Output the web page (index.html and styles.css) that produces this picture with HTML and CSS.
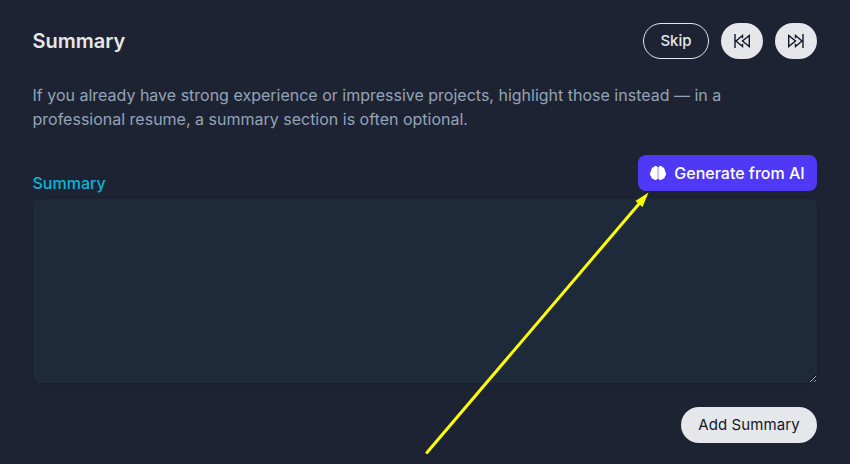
FILE: index.html
```html
<!DOCTYPE html>
<html lang="en">
<head>
<meta charset="utf-8">
<title>Summary</title>
<link rel="stylesheet" href="styles.css">
</head>
<body>
<main class="panel">
  <header class="header">
    <h1>Summary</h1>
    <div class="actions">
      <button class="btn skip">Skip</button>
      <button class="btn light nav" aria-label="Previous"><svg width="18" height="18" viewBox="0 0 18 18"><path d="M2 2v14M9.500 11.700v2.800L3 9l6.500-5.500v2.800M16.300 3.500v11L9.500 9z"/></svg></button>
      <button class="btn light nav" aria-label="Next"><svg width="18" height="18" viewBox="0 0 18 18"><path d="M16 2v14M8.500 6.300V3.500L15 9l-6.500 5.500v-2.800M1.700 3.500v11L8.500 9z"/></svg></button>
    </div>
  </header>
  <p class="hint">If you already have strong experience or impressive projects, highlight those instead — in a professional resume, a summary section is often optional.</p>
  <div class="field-head">
    <label for="summary">Summary</label>
    <button class="generate"><svg width="16" height="14" viewBox="0 0 16 14"><path class="gap" d="M7 1h2v12H7z"/><path class="lobes" d="M5.800 0C4.600 0 3.900.5 3.500 1.200 2.200 1.400 1.500 2.500 1.500 3.600.9 4.200.7 5 .8 5.700.3 6.300 0 7.100 0 8c0 1.100.5 2 1.200 2.500 0 1.300.9 2.300 2.300 2.400C4 13.600 4.700 14 5.700 14c1 0 1.700-.7 1.700-1.700V1.500C7.400.6 6.700 0 5.800 0zM10.200 0c1.200 0 1.900.5 2.300 1.200 1.300.2 2 1.300 2 2.400.6.6.8 1.400.7 2.100.5.6.8 1.400.8 2.300 0 1.100-.5 2-1.200 2.500 0 1.300-.9 2.300-2.300 2.400-.5.700-1.200 1.100-2.200 1.100-1 0-1.700-.7-1.700-1.700V1.500C8.600.6 9.300 0 10.200 0z"/></svg>Generate from AI</button>
  </div>
  <textarea id="summary"></textarea>
  <footer><button class="btn light add">Add Summary</button></footer>
</main>
<svg class="pointer" width="850" height="464" viewBox="0 0 850 464"><path class="shaft" d="M427 452.500L641 201.500"/><path class="head" d="M648.500 192.500L642.500 207L635.500 201z"/></svg>
</body>
</html>
```
FILE: styles.css
```css
* { box-sizing: border-box; }
body {
  margin: 0;
  background: #1d2332;
  color: #e5e7eb;
  font: 16px/24px Inter, sans-serif;
  overflow: hidden;
}
.panel { padding: 23px 33px 0 32.5px; }
.header { display: flex; justify-content: space-between; align-items: center; height: 36px; }
h1 { margin: 0; font-size: 20px; line-height: 28px; font-weight: 600; }
.actions { display: flex; gap: 12px; }
button { font: inherit; margin: 0; padding: 0; color: inherit; border: 0; }
.btn { height: 36px; border-radius: 18px; font-size: 15px; font-weight: 500; display: flex; align-items: center; justify-content: center; }
.skip { width: 66px; border: 1px solid #e5e7eb; background: none; }
.light { background: #e5e7eb; color: #111827; }
.nav { width: 42px; }
.nav svg { fill: none; stroke: #111827; stroke-width: 1.4; stroke-linejoin: miter; }
.hint { margin: 24px 0; color: #94a3b8; }
.field-head { display: flex; justify-content: space-between; height: 37px; margin-bottom: 7px; }
label { color: #00b8db; font-weight: 500; align-self: flex-end; margin-bottom: -3px; }
.generate { width: 179px; height: 36px; border-radius: 8px; background: #4f39f6; color: #fff; font-weight: 500; display: flex; align-items: center; justify-content: center; gap: 8px; }
.lobes { fill: #fff; }
.gap { fill: #a79cfb; }
textarea { display: block; width: 784px; height: 184px; margin-left: auto; border: 0; border-radius: 8px; background: #1e2939; box-shadow: 0 1px 3px #0000001a; resize: vertical; }
footer { display: flex; justify-content: flex-end; margin-top: 24px; }
.add { width: 136px; font-weight: 400; letter-spacing: .1px; }
.pointer { position: absolute; left: 0; top: 0; pointer-events: none; }
.shaft { fill: none; stroke: #ff0; stroke-width: 3; stroke-linecap: round; }
.head { fill: #ff0; }
```
